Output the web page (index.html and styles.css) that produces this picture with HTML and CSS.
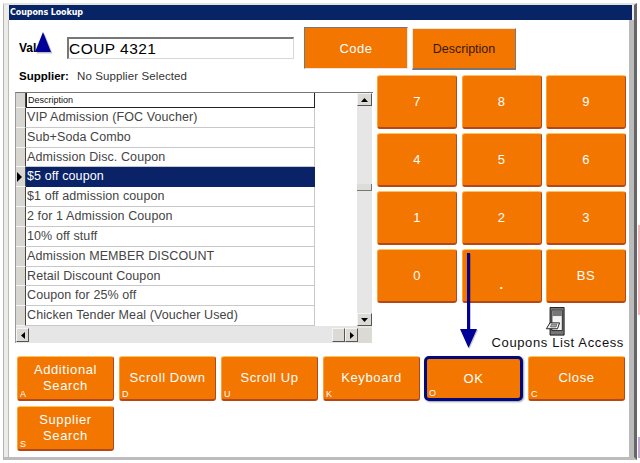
FILE: index.html
```html
<!DOCTYPE html>
<html>
<head>
<meta charset="utf-8">
<title>Coupons Lookup</title>
<link rel="stylesheet" href="styles.css">
</head>
<body>
<div class="strip pink"></div>
<div class="strip purple"></div>
<div class="window">
  <div class="titlebar">Coupons Lookup</div>
  <div class="content">
    <div class="upper">
      <div class="left">
        <div class="value-row">
          <span class="val-label">Val</span>
          <div class="val-input">COUP 4321</div>
        </div>
        <div class="supplier"><b>Supplier:</b><span>No Supplier Selected</span></div>
        <div class="grid">
          <div class="grid-main">
            <div class="grid-rows">
              <div class="row head"><i class="ind"></i><span class="cell">Description</span></div>
              <div class="row"><i class="ind"></i><span class="cell">VIP Admission (FOC Voucher)</span></div>
              <div class="row"><i class="ind"></i><span class="cell">Sub+Soda Combo</span></div>
              <div class="row"><i class="ind"></i><span class="cell">Admission Disc. Coupon</span></div>
              <div class="row sel"><i class="ind"><svg width="6" height="10" viewBox="0 0 6 10"><path d="M1 0L6 5L1 10Z" fill="#000"/></svg></i><span class="cell">$5 off coupon</span></div>
              <div class="row"><i class="ind"></i><span class="cell">$1 off admission coupon</span></div>
              <div class="row"><i class="ind"></i><span class="cell">2 for 1 Admission Coupon</span></div>
              <div class="row"><i class="ind"></i><span class="cell">10% off stuff</span></div>
              <div class="row"><i class="ind"></i><span class="cell">Admission MEMBER DISCOUNT</span></div>
              <div class="row"><i class="ind"></i><span class="cell">Retail Discount Coupon</span></div>
              <div class="row"><i class="ind"></i><span class="cell">Coupon for 25% off</span></div>
              <div class="row"><i class="ind"></i><span class="cell">Chicken Tender Meal (Voucher Used)</span></div>
            </div>
            <div class="vscroll">
              <div class="sb-btn"><svg width="7" height="4" viewBox="0 0 7 4"><path d="M3.5 0L7 4H0Z"/></svg></div>
              <div class="sb-track tall"></div>
              <div class="sb-thumb"></div>
              <div class="sb-track lower"></div>
              <div class="sb-btn"><svg width="7" height="4" viewBox="0 0 7 4"><path d="M0 0H7L3.5 4Z"/></svg></div>
            </div>
          </div>
          <div class="hscroll">
            <div class="sb-btn wide"><svg width="4" height="7" viewBox="0 0 4 7"><path d="M4 0V7L0 3.5Z"/></svg></div>
            <div class="sb-track grow"></div>
            <div class="sb-btn wide"></div>
            <div class="sb-btn wide"><svg width="4" height="7" viewBox="0 0 4 7"><path d="M0 0V7L4 3.5Z"/></svg></div>
            <div class="corner"></div>
          </div>
        </div>
      </div>
      <div class="right">
        <div class="tabs">
          <div class="tab active">Code</div>
          <div class="tab">Description</div>
        </div>
        <div class="keypad">
          <div class="btn">7</div><div class="btn">8</div><div class="btn">9</div>
          <div class="btn">4</div><div class="btn">5</div><div class="btn">6</div>
          <div class="btn">1</div><div class="btn">2</div><div class="btn">3</div>
          <div class="btn">0</div><div class="btn dot">.</div><div class="btn">BS</div>
        </div>
        <div class="access">
          <svg class="access-icon" width="21" height="32" viewBox="0 0 21 32">
            <path d="M4.5 .5H20V31H4.5Z" fill="#777" stroke="#111"/>
            <path d="M6.5 3.5H18V26H6.5Z" fill="#f4f4f4" stroke="#222"/>
            <path d="M7 4H17.5V10H7Z" fill="#777"/>
            <path d="M4.3 17.5H15L12.7 24H.5Z" fill="#f4f4f4" stroke="#111"/>
            <path d="M6 19H12L11 22H5Z" fill="#a8a8a8" stroke="#333" stroke-width=".6"/>
          </svg>
          <div class="access-label">Coupons List Access</div>
        </div>
      </div>
    </div>
    <div class="actions">
      <div class="btn act"><span>Additional<br>Search</span><small>A</small></div>
      <div class="btn act"><span>Scroll Down</span><small>D</small></div>
      <div class="btn act"><span>Scroll Up</span><small>U</small></div>
      <div class="btn act"><span>Keyboard</span><small>K</small></div>
      <div class="btn act ok"><span>OK</span><small>O</small></div>
      <div class="btn act"><span>Close</span><small>C</small></div>
      <div class="btn act"><span>Supplier<br>Search</span><small>S</small></div>
    </div>
  </div>
  <svg class="mark-tri" width="20" height="24" viewBox="0 0 20 24"><path d="M8 1L16 21H0Z" fill="#000" opacity=".25" transform="translate(1.5 1.5)"/><path d="M8 1L16 21H0Z" fill="#000099"/></svg>
  <svg class="mark-arrow" width="24" height="102" viewBox="0 0 24 102"><path d="M10 3H13V79H20L11.5 98L3 79H10Z" fill="#000" opacity=".22" transform="translate(1 1)"/><path d="M10 3H13V79H20L11.5 98L3 79H10Z" fill="#000099"/></svg>
</div>
</body>
</html>
```
FILE: styles.css
```css
* { box-sizing: border-box; }
html, body { margin: 0; padding: 0; background: #fff; }
body { position: relative; width: 640px; height: 463px; overflow: hidden; font-family: "Liberation Sans", Arial, sans-serif; color: #000; }

.strip { position: absolute; left: 638px; width: 2px; }
.strip.pink { top: 225px; height: 90px; background: #f8b4b8; }
.strip.purple { top: 437px; height: 21px; background: #c4a8d8; }

.window {
  position: relative;
  width: 634px;
  height: 457px;
  margin: 3px 0 0 3px;
  padding-left: 5px;
  background: #ecebe8;
  border-top: 2px solid #e4e4e0;
  border-left: 1px solid #b4b4b4;
  border-right: 3px solid #666;
  border-bottom: 3px solid #bcbcbc;
}
.titlebar {
  height: 15px;
  margin-right: 2px;
  background: #062466;
  color: #fff;
  font: bold 8px/15px "DejaVu Sans", sans-serif;
  padding-left: 1px;
  letter-spacing: -.1px;
}
.content {
  padding: 7px 3px 0 6px;
  background: #fff;
  height: 437px;
  border-right: 5px solid #bbb;
  box-shadow: -1px 0 0 #bbb;
}

.upper { display: flex; gap: 5px; height: 329px; }
.left { width: 357px; flex: none; }
.right { flex: 1; display: flex; flex-direction: column; }

.value-row { display: flex; align-items: center; height: 33px; padding: 8px 0 0 4px; }
.val-label { width: 48px; font: bold 12px "Liberation Sans", sans-serif; overflow: hidden; }
.val-input {
  width: 227px;
  height: 22px;
  margin-top: 1px;
  border: 1px solid #d8d8d8;
  border-top: 2px solid #777;
  border-left: 2px solid #777;
  font-size: 15.5px;
  line-height: 19px;
  padding-left: 0;
  letter-spacing: .45px;
}
.supplier { height: 16px; margin-top: 8px; padding-left: 4px; font-size: 11.5px; line-height: 16px; display: flex; color: #222; }
.supplier b { color: #000; width: 58px; }
.supplier span { letter-spacing: .1px; color: #333; }

.grid { margin-top: 8px; width: 358px; height: 251px; border-top: 1px solid #777; border-left: 1px solid #999; }
.grid-main { display: flex; height: 233px; }
.grid-rows { width: 341px; background: #fff; }
.row { display: flex; height: 19.82px; }
.row.head { height: 15px; }
.ind {
  width: 10px;
  flex: none;
  background: #d8d6d0;
  border-right: 1px solid #444;
  border-bottom: 1px solid #f4f4f4;
  display: flex;
  align-items: center;
}
.cell {
  width: 289px;
  border-right: 1px solid #c8c8c8;
  border-bottom: 1px solid #c8c8c8;
  font-size: 12.5px;
  line-height: 19px;
  padding-left: 1px;
  color: #444;
  letter-spacing: .1px;
  white-space: nowrap;
}
.head .cell { border: 1px solid #222; border-top: 0; font-size: 9px; line-height: 14px; color: #111; letter-spacing: 0; }
.sel .cell { background: #0a2268; color: #fff; border-color: #0a2268; }

.vscroll { width: 15px; display: flex; flex-direction: column; }
.sb-track { background: #e6e6e6; }
.sb-track.tall { height: 78px; }
.sb-track.lower { flex: 1; }
.sb-thumb { height: 7px; background: #dedcd6; border-right: 1px solid #777; border-bottom: 1px solid #777; }
.sb-btn {
  width: 15px;
  height: 13px;
  flex: none;
  background: #dcdad4;
  border: 1px solid #f4f4f4;
  border-right: 1px solid #555;
  border-bottom: 1px solid #555;
  display: flex;
  align-items: center;
  justify-content: center;
}
.sb-btn.wide { width: 13px; height: 14px; }
.hscroll { display: flex; width: 356px; height: 17px; padding-top: 2px; background: #e6e6e6; }
.sb-track.grow { flex: 1; }
.corner { width: 14px; height: 15px; background: #dcdad4; }

.tabs { display: flex; gap: 4px; margin-left: -73px; height: 43px; }
.tab {
  width: 104px;
  height: 42px;
  margin-top: 1px;
  background: #f27600;
  border: 1px solid #e8e8e8;
  border-right: 1px solid #777;
  border-bottom: 2px solid #777;
  display: flex;
  align-items: center;
  justify-content: center;
  font-size: 12.5px;
  color: #3a1800;
}
.tab.active {
  margin-top: 0;
  color: #fff;
  font-size: 13px;
  letter-spacing: .5px;
  border: 1px solid #e8e8e8;
  border-top: 1px solid #777;
  border-left: 1px solid #777;
}

.btn {
  background: #f27600;
  border-radius: 3px;
  border-top: 1px solid #ffc35a;
  border-left: 1px solid #ffa030;
  border-right: 1px solid #b5481a;
  border-bottom: 2px solid #b5481a;
  color: #fff;
  display: flex;
  align-items: center;
  justify-content: center;
  font-size: 13px;
  letter-spacing: .5px;
  position: relative;
}
.keypad {
  display: grid;
  grid-template-columns: 80px 80px 80px;
  grid-auto-rows: 54px;
  column-gap: 4.5px;
  row-gap: 4px;
  margin-top: 5px;
}
.btn.dot { align-items: flex-end; padding-bottom: 9px; font-weight: bold; }
.access { height: 42px; margin-top: 4px; display: flex; flex-direction: column; align-items: flex-end; padding-right: 2px; }
.access-icon { margin-right: 58px; }
.access-label {
  font-size: 13px;
  line-height: 13px;
  letter-spacing: .62px;
  white-space: nowrap;
  color: #111;
}

.actions {
  display: grid;
  grid-template-columns: 97px 97px 97px 97px 98px 97px;
  grid-auto-rows: 45px;
  column-gap: 5px;
  row-gap: 5px;
  margin: 0 0 0 2px;
  width: 620px;
}
.act span { text-align: center; line-height: 16px; letter-spacing: .6px; }
.act small { position: absolute; left: 2px; bottom: 0; font-size: 9px; line-height: 10px; letter-spacing: 0; }
.ok { border: 3px solid #000a80; border-radius: 5px; box-shadow: 1px 1px 2px rgba(0,0,0,.4); margin-left: -1px; }

.mark-tri { position: absolute; left: 31px; top: 26px; }
.mark-arrow { position: absolute; left: 453px; top: 245px; }
```
